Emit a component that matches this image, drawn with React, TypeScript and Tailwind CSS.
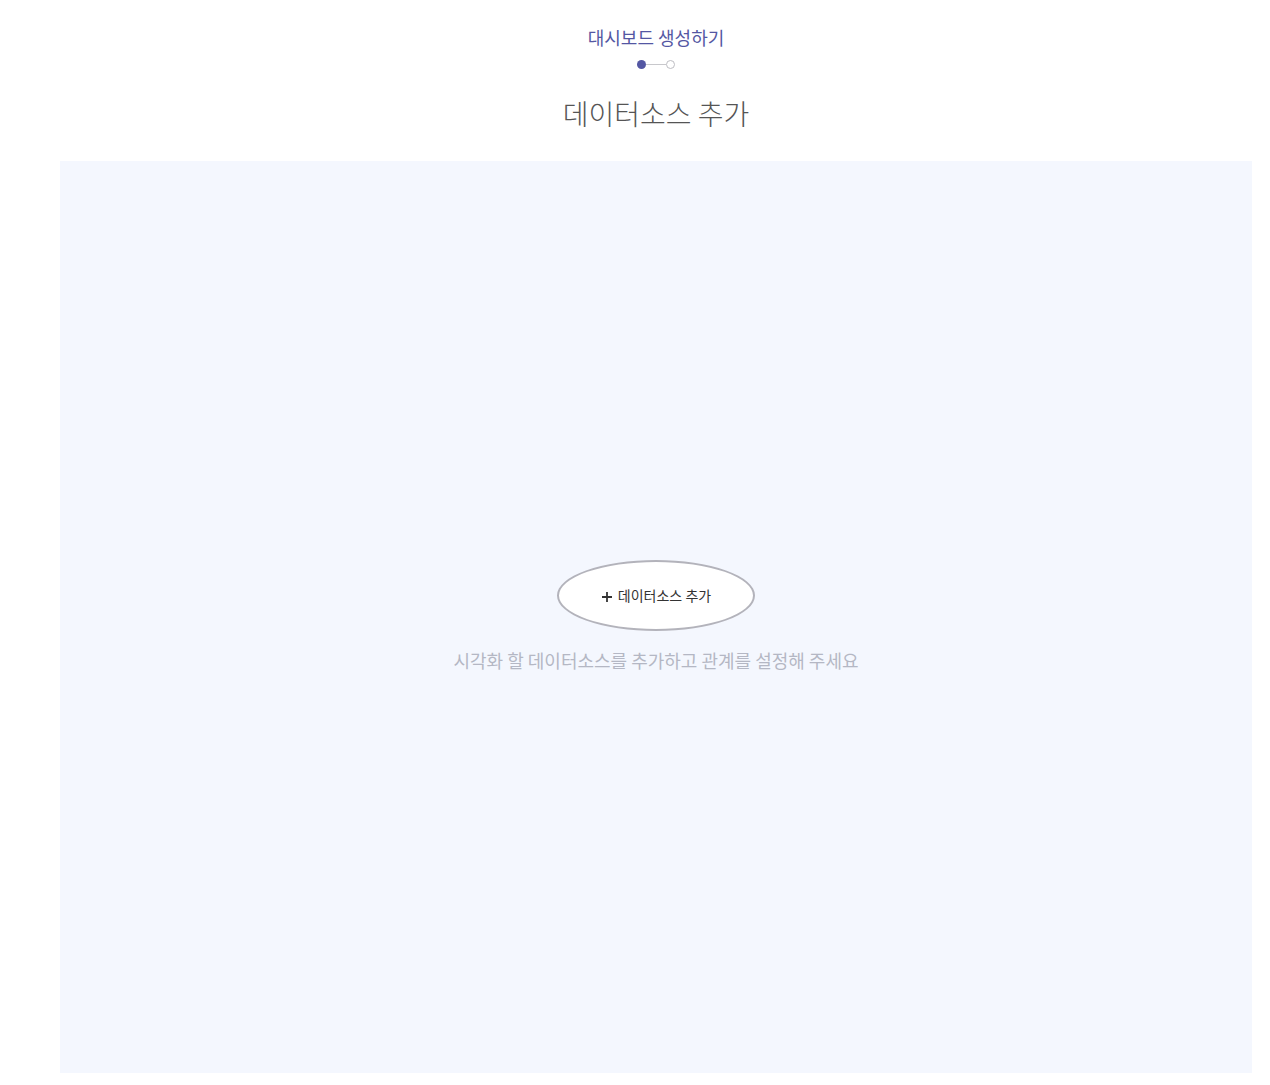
export default function App() {
  return (
    <div className="min-h-[1085px] bg-white font-['Noto_Sans_CJK_KR','Noto_Sans',sans-serif]">
      <div className="ml-[60px] w-[1192px] flex flex-col items-center">
        <div className="pt-[24px] text-[18px] leading-[26px] text-[#5457a3]">대시보드 생성하기</div>
        <div className="mt-[10px] flex items-center">
          <span className="h-[9px] w-[9px] rounded-full bg-[#5457a3]" />
          <span className="h-px w-[20px] bg-[#c8c8cc]" />
          <span className="h-[9px] w-[9px] rounded-full border border-[#bdbdc2] bg-white" />
        </div>
        <h1 className="mt-[24px] text-[28px] font-light leading-[40px] text-[#555]">데이터소스 추가</h1>
        <div className="mt-[28px] flex h-[912px] w-full flex-col items-center bg-[#f4f7fe]">
          <button className="mt-[399px] flex h-[71px] w-[198px] items-center justify-center gap-[5px] rounded-[50%] border-2 border-[#b3b3bb] bg-white text-[14px] text-[#333]">
            <svg width="12" height="12" viewBox="0 0 12 12" className="mt-[2px]">
              <path d="M6 1v10M1 6h10" stroke="#333" strokeWidth="1.8" />
            </svg>
            데이터소스 추가
          </button>
          <p className="mt-[16px] text-[18px] leading-[26px] text-[#b4b7c4]">
            시각화 할 데이터소스를 추가하고 관계를 설정해 주세요
          </p>
        </div>
      </div>
    </div>
  );
}
